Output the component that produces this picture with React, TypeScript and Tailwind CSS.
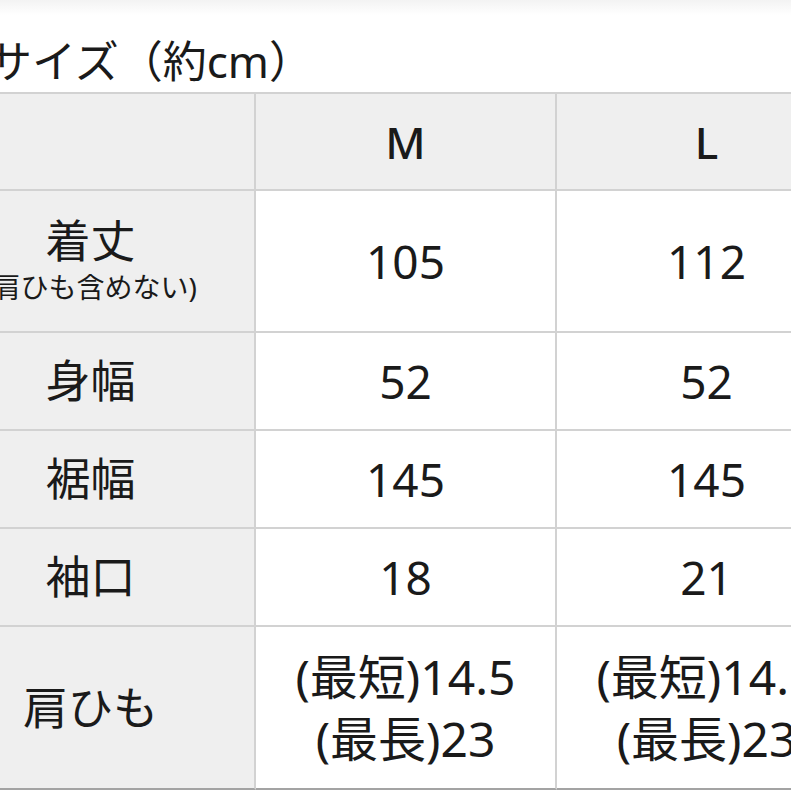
const rows: { label: string; sub?: string; m: string[]; l: string[]; h: string }[] = [
  { label: '着丈', sub: '(肩ひも含めない)', m: ['105'], l: ['112'], h: 'h-[142px]' },
  { label: '身幅', m: ['52'], l: ['52'], h: 'h-[98px]' },
  { label: '裾幅', m: ['145'], l: ['145'], h: 'h-[98px]' },
  { label: '袖口', m: ['18'], l: ['21'], h: 'h-[98px]' },
  { label: '肩ひも', m: ['(最短)14.5', '(最長)23'], l: ['(最短)14.5', '(最長)23'], h: 'h-[163px]' },
];

function Values({ lines }: { lines: string[] }) {
  // multi-line cells (肩ひも) are set a little larger in the source
  const size = lines.length > 1 ? 'text-[48px]' : 'text-[46px]';
  return (
    <div className={`flex flex-col items-center leading-[62px] whitespace-nowrap ${size}`}>
      {lines.map((t) => (
        <span key={t}>{t}</span>
      ))}
    </div>
  );
}

export default function App() {
  return (
    <div
      className="w-[791px] h-[791px] overflow-hidden bg-white text-[#1a1a1a]"
      style={{ fontFamily: '"Noto Sans", "Noto Sans CJK JP", sans-serif' }}
    >
      <div className="h-[15px] bg-gradient-to-b from-[#f3f3f3] to-white" />
      <div className="h-[77px] -ml-[12px] flex items-center pt-[14px] text-[44px] whitespace-nowrap">
        サイズ（約cm）
      </div>
      <div className="-ml-[75px] w-[933px] border-t-2 border-[#d2d2d2]">
        <div className="grid grid-cols-[331px_301px_301px] text-[44px]">
          <div className="h-[97px] bg-[#efefef] border-r-2 border-b-2 border-[#d2d2d2]" />
          <div className="h-[97px] bg-[#efefef] border-r-2 border-b-2 border-[#d2d2d2] flex items-center justify-center font-medium">
            M
          </div>
          <div className="h-[97px] bg-[#efefef] border-r-2 border-b-2 border-[#d2d2d2] flex items-center justify-center font-medium">
            L
          </div>
          {rows.map((r, i) => {
            const last = i === rows.length - 1;
            const bb = last ? 'border-b-2 border-b-[#a3a3a3]' : 'border-b-2';
            return (
              <div key={r.label} className="contents">
                <div
                  className={`${r.h} bg-[#efefef] border-r-2 ${bb} border-[#d2d2d2] flex flex-col items-center justify-center pl-[2px]`}
                >
                  <span className="leading-[52px] text-[45px]">{r.label}</span>
                  {r.sub && <span className="text-[28px] leading-[40px] whitespace-nowrap">{r.sub}</span>}
                </div>
                <div className={`${r.h} bg-white border-r-2 ${bb} border-[#d2d2d2] flex items-center justify-center`}>
                  <Values lines={r.m} />
                </div>
                <div className={`${r.h} bg-white border-r-2 ${bb} border-[#d2d2d2] flex items-center justify-center`}>
                  <Values lines={r.l} />
                </div>
              </div>
            );
          })}
        </div>
      </div>
    </div>
  );
}
